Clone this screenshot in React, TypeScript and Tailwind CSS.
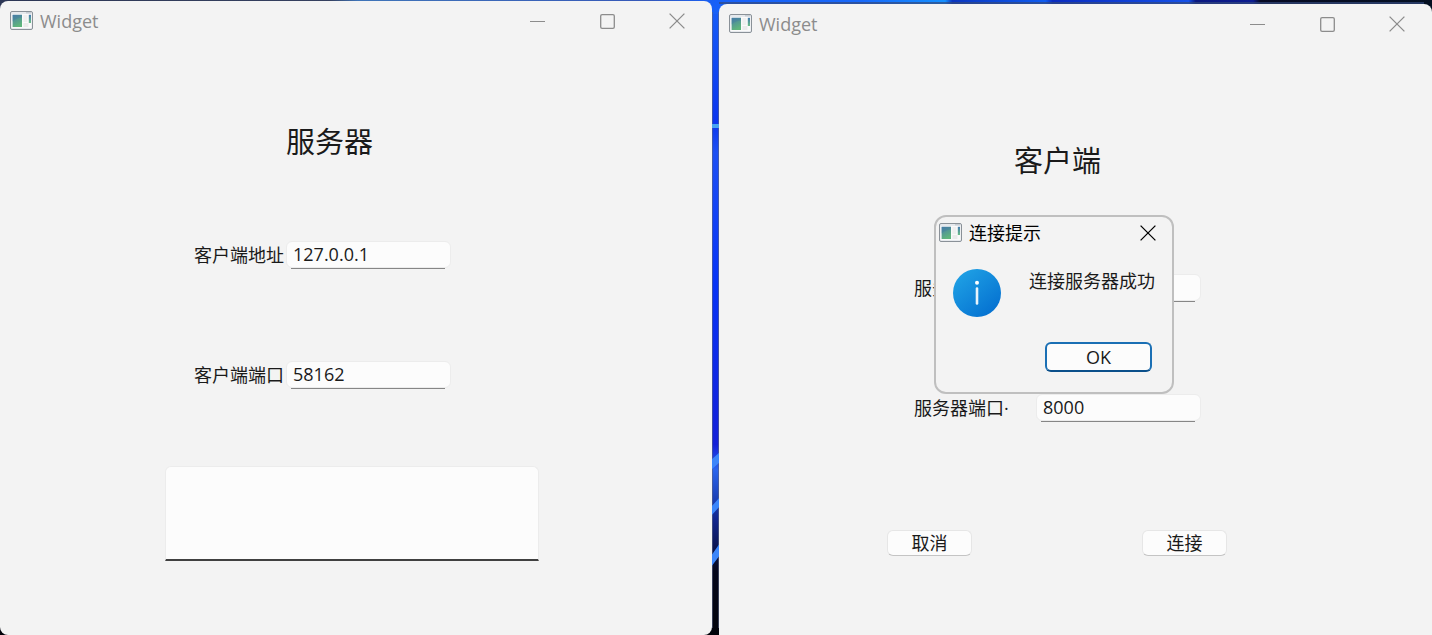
import { useId } from "react";
import type { ReactNode } from "react";

function AppIcon() {
  const id = useId();
  return (
    <svg width="23" height="20" viewBox="0 0 23 20" aria-hidden="true" className="shrink-0">
      <defs>
        <linearGradient id={`${id}pane`} x1="0" y1="0" x2="0.4" y2="1">
          <stop offset="0" stopColor="#4a7fa8" />
          <stop offset="1" stopColor="#5fb57c" />
        </linearGradient>
        <linearGradient id={`${id}sliver`} x1="0" y1="0" x2="0" y2="1">
          <stop offset="0" stopColor="#4379b0" />
          <stop offset="1" stopColor="#6cbf86" />
        </linearGradient>
      </defs>
      <rect x="0.5" y="0.5" width="22" height="18" rx="1.5" fill="#e6e9ed" stroke="#8a9198" />
      <path d="M16 1.8H21" stroke="#b9c0c8" />
      <rect x="1.6" y="3" width="19.8" height="14" fill="#fafafa" />
      <rect x="2.6" y="3.8" width="9.4" height="12.2" fill={`url(#${id}pane)`} />
      <path d="M2.6 10.5C6 7.6 9 7 12 6.6V3.8H2.6Z" fill="#3f76a4" opacity="0.35" />
      <rect x="13.4" y="4" width="4" height="7" fill="#efefef" />
      <rect x="13.4" y="12" width="5" height="4" fill="#ebebeb" />
      <rect x="18.8" y="3.8" width="2.2" height="8.2" fill={`url(#${id}sliver)`} />
    </svg>
  );
}

function CloseGlyph() {
  return (
    <svg width="16" height="16" viewBox="0 0 16 16" fill="none" stroke="currentColor" strokeWidth="1.3" aria-hidden="true">
      <path d="M0.6 0.6 15.4 15.4M15.4 0.6 0.6 15.4" />
    </svg>
  );
}

function TitleBar({ title }: { title: string }) {
  return (
    <header className="flex h-10 items-center pl-2.5 text-[#8c8c8c]">
      <AppIcon />
      <h1 className="ml-[7px] flex-1 text-[18px] leading-6">{title}</h1>
      <button type="button" aria-label="Minimize" className="flex h-10 w-[70px] items-center justify-center">
        <svg width="15" height="15" viewBox="0 0 15 15" stroke="currentColor" aria-hidden="true">
          <path d="M0 7.5H15" />
        </svg>
      </button>
      <button type="button" aria-label="Maximize" className="flex h-10 w-[70px] items-center justify-center">
        <svg width="15" height="15" viewBox="0 0 15 15" fill="none" stroke="currentColor" strokeWidth="1.3" aria-hidden="true">
          <rect x="0.7" y="0.7" width="13.6" height="13.6" rx="1.4" />
        </svg>
      </button>
      <button type="button" aria-label="Close" className="flex h-10 w-[70px] items-center justify-center">
        <CloseGlyph />
      </button>
    </header>
  );
}

function Field({ label, value, wide = false }: { label: string; value: string; wide?: boolean }) {
  const id = useId();
  return (
    <div className="flex items-center">
      <label htmlFor={id} className={wide ? "w-[122px] text-[18px] leading-7" : "w-[92px] text-[18px] leading-7"}>
        {label}
      </label>
      <div className="w-[165px]">
        <input
          id={id}
          defaultValue={value}
          className="block h-[27px] w-full rounded-md border border-[#ececec] bg-[#fcfcfc] px-1.5 text-[18px] outline-none"
        />
        <div className="mr-1.5 ml-[5px] h-px bg-[#868686]" />
      </div>
    </div>
  );
}

function PushButton({ children }: { children: ReactNode }) {
  return (
    <button
      type="button"
      className="flex h-[26px] w-[85px] items-center justify-center rounded-md border border-[#e6e6e6] border-b-[#c4c4c4] bg-[#fcfcfc] text-[18px] leading-6"
    >
      {children}
    </button>
  );
}

function InfoIcon() {
  return (
    <svg width="48" height="48" viewBox="0 0 48 48" aria-hidden="true" className="shrink-0">
      <defs>
        <linearGradient id="info" x1="0.15" y1="0.1" x2="0.85" y2="0.95">
          <stop offset="0" stopColor="#1e9fe4" />
          <stop offset="1" stopColor="#0470d0" />
        </linearGradient>
      </defs>
      <circle cx="24" cy="24" r="24" fill="url(#info)" />
      <circle cx="24" cy="13.8" r="2" fill="#fff" />
      <path d="M24 19.5V34.5" stroke="#e8f4fc" strokeWidth="2.6" strokeLinecap="round" />
    </svg>
  );
}

function MessageDialog() {
  return (
    <div
      role="dialog"
      aria-labelledby="dialog-title"
      className="absolute top-[211px] left-[215px] w-[240px] rounded-xl border-2 border-[#bfbfbf] bg-[#f3f3f3] pb-5"
    >
      <div className="flex h-8 items-center pl-[3px] text-black">
        <AppIcon />
        <h2 id="dialog-title" className="ml-[7px] flex-1 text-[18px] leading-6">
          连接提示
        </h2>
        <button type="button" aria-label="Close" className="flex h-8 w-12 items-center justify-center">
          <CloseGlyph />
        </button>
      </div>
      <div className="mt-5 flex justify-between pr-[17px] pl-[17px]">
        <InfoIcon />
        <p className="text-[18px] leading-6">连接服务器成功</p>
      </div>
      <div className="mt-[25px] flex justify-end pr-5">
        <button
          type="button"
          className="flex h-[30px] w-[107px] items-center justify-center rounded-md border-2 border-[#1a6fb4] border-b-[#0a4f8a] bg-[#fcfcfc] text-[18px] leading-6"
        >
          OK
        </button>
      </div>
    </div>
  );
}

export default function App() {
  return (
    <div className="relative isolate grid min-h-screen grid-cols-[712fr_713fr] gap-x-[7px] overflow-hidden bg-[#071022] font-['Open_Sans','Noto_Sans_CJK_SC',sans-serif] text-[#1a1a1a]">
      <svg viewBox="0 0 1432 635" preserveAspectRatio="none" aria-hidden="true" className="absolute inset-0 -z-10 h-full w-full">
        <defs>
          <linearGradient id="gap" x1="0" y1="0" x2="0" y2="1">
            <stop offset="0" stopColor="#1760f8" />
            <stop offset="0.19" stopColor="#0b35ee" />
            <stop offset="0.24" stopColor="#1d50f4" />
            <stop offset="0.45" stopColor="#0633f6" />
            <stop offset="0.7" stopColor="#1420d8" />
            <stop offset="0.74" stopColor="#2a65ee" />
            <stop offset="0.82" stopColor="#10248c" />
            <stop offset="0.9" stopColor="#05071c" />
            <stop offset="1" stopColor="#02030a" />
          </linearGradient>
          <linearGradient id="top" x1="0" y1="0" x2="1" y2="0">
            <stop offset="0" stopColor="#2c3655" />
            <stop offset="0.23" stopColor="#35405f" />
            <stop offset="0.25" stopColor="#3f74b8" />
            <stop offset="0.45" stopColor="#3558b8" />
            <stop offset="0.5" stopColor="#1760f8" />
            <stop offset="0.6" stopColor="#1768fa" />
            <stop offset="0.66" stopColor="#1590ff" />
            <stop offset="0.665" stopColor="#0a36c0" />
            <stop offset="0.73" stopColor="#0f5cf0" />
            <stop offset="0.735" stopColor="#0a2cc0" />
            <stop offset="0.83" stopColor="#1450e8" />
            <stop offset="0.835" stopColor="#0a1880" />
            <stop offset="0.875" stopColor="#0c1c90" />
            <stop offset="0.88" stopColor="#060a24" />
            <stop offset="1" stopColor="#041022" />
          </linearGradient>
        </defs>
        <rect width="1432" height="635" fill="url(#gap)" />
        <rect width="1432" height="14" fill="url(#top)" />
        <path d="M719 3H1424" stroke="#34497c" strokeWidth="2" opacity="0.7" />
        <path d="M712.5 12V628M718.5 12V628" stroke="#5a6484" opacity="0.6" />
        <rect x="712" y="124" width="7" height="4" fill="#48a4f0" />
        <path d="M711 460l9 -8v10l-9 8zM711 507l9 -10v9l-9 10zM711 556l9 -13v12l-9 12z" fill="#3c86fa" />
      </svg>

      <main className="mt-px rounded-lg bg-[#f3f3f3]">
        <TitleBar title="Widget" />
        <h2 className="mt-[81px] ml-[286px] text-[29px] leading-10">服务器</h2>
        <div className="mt-[79px] ml-[194px] flex flex-col gap-[92px]">
          <Field label="客户端地址" value="127.0.0.1" />
          <Field label="客户端端口" value="58162" />
        </div>
        <textarea
          aria-label="消息"
          className="mt-[77px] ml-[165px] block h-[95px] w-[374px] resize-none rounded-t-md border border-b-2 border-[#ececec] border-b-[#404040] bg-[#fcfcfc] p-1.5 text-[18px] outline-none"
        />
      </main>

      <main className="relative mt-1 rounded-t-lg bg-[#f3f3f3]">
        <TitleBar title="Widget" />
        <h2 className="mt-[97px] ml-[295px] text-[29px] leading-10">客户端</h2>
        <div className="mt-[93px] ml-[195px] flex flex-col gap-[92px]">
          <Field label="服务器地址" value="127.0.0.1" wide />
          <Field label="服务器端口·" value="8000" wide />
        </div>
        <div className="mt-[108px] ml-[168px] flex gap-[170px]">
          <PushButton>取消</PushButton>
          <PushButton>连接</PushButton>
        </div>
        <MessageDialog />
      </main>
    </div>
  );
}
